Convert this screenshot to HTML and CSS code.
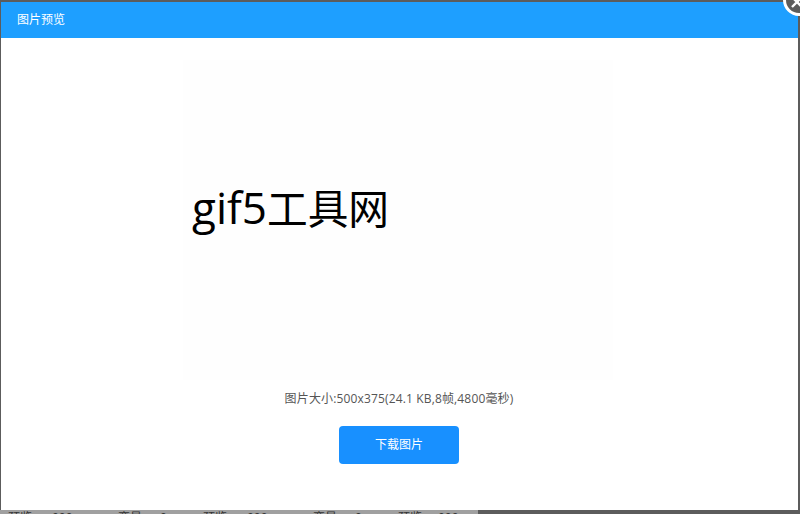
FILE: index.html
```html
<!DOCTYPE html>
<html lang="zh-CN">
<head>
<meta charset="utf-8">
<title>图片预览</title>
<link rel="stylesheet" href="styles.css">
</head>
<body>
<div class="modal">
  <header class="modal-head">图片预览</header>
  <main class="modal-body">
    <div class="preview"><span class="preview-text">gif5<span class="preview-cjk">工具网</span></span></div>
    <p class="info">图片大小:500x375(24.1 KB,8帧,4800毫秒)</p>
    <a class="download">下载图片</a>
  </main>
  <button class="close" aria-label="关闭">
    <svg viewBox="0 0 14 14" width="14" height="14"><path d="M2 2L12 12M12 2L2 12" stroke="#fff" stroke-width="2.4" fill="none"/></svg>
  </button>
</div>
<div class="behind">
  <span class="cell w1">预览</span><span class="cell w2">900</span><span class="cell w3">变量</span><span class="cell w4">0</span>
  <span class="cell w1b">预览</span><span class="cell w2">900</span><span class="cell w3b">变量</span><span class="cell w4">0</span>
  <span class="cell w1c">预览</span><span class="cell w2">900</span>
</div>
</body>
</html>
```
FILE: styles.css
```css
* { box-sizing: border-box; }
html, body { margin: 0; padding: 0; height: 514px; overflow: hidden; }
body {
  background: #5c5c5c;
  font-family: "Open Sans", "Noto Sans CJK SC", sans-serif;
  padding-top: 2px;
}
.modal {
  position: relative;
  height: 508px;
  margin: 0 2px 0 1px;
  background: #fff;
  display: flex;
  flex-direction: column;
}
.modal-head {
  height: 36px;
  flex: none;
  background: #1e9fff;
  color: #fff;
  font-size: 12px;
  line-height: 36px;
  padding-left: 16px;
}
.modal-body {
  flex: 1;
  display: flex;
  flex-direction: column;
  align-items: center;
}
.preview {
  align-self: flex-start;
  width: 430px;
  height: 320px;
  margin: 22px 0 0 182px;
  background: #fefefe;
  padding: 117px 0 0 9px;
  color: #000;
  font-size: 44px;
  line-height: 60px;
}
.preview-text { display: block; white-space: nowrap; }
.preview-cjk { font-size: 40.7px; }
.info {
  margin: 10px 1px 0 0;
  font-size: 12px;
  letter-spacing: .15px;
  line-height: 18px;
  color: #555;
}
.download {
  margin: 18px 1px 0 0;
  width: 120px;
  height: 38px;
  background: #1890ff;
  border-radius: 4px;
  color: #fff;
  font-size: 12px;
  line-height: 38px;
  text-align: center;
}
.close {
  position: absolute;
  top: -18px;
  right: -17px;
  width: 32px;
  height: 32px;
  padding: 4px 4px 0 0;
  border: 3px solid #fff;
  border-radius: 50%;
  background: #5c5c5c;
  display: flex;
  align-items: center;
  justify-content: center;
}
.behind {
  display: flex;
  height: 4px;
  width: 478px;
  overflow: hidden;
  background: #a0a0a0;
  font-size: 12px;
  line-height: 16px;
  color: #333;
}
.cell { display: block; flex: none; white-space: nowrap; }
.w1 { width: 52px; padding-left: 8px; }
.w2 { width: 66px; }
.w3 { width: 42px; }
.w4 { width: 43px; }
.w1b { width: 44px; }
.w3b { width: 42px; }
.w1c { width: 40px; }
```
